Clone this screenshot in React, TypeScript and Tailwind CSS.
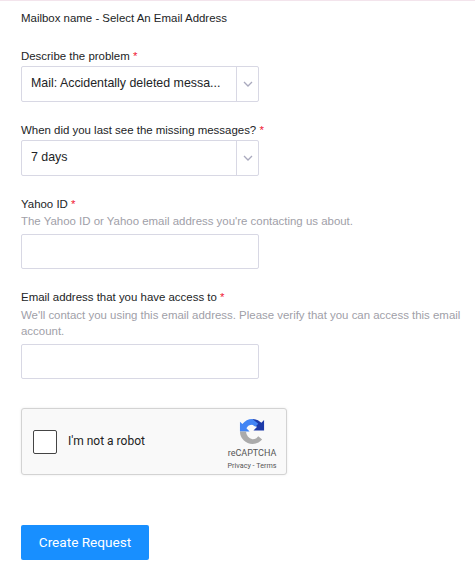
import React from "react";

const font = "font-['Liberation_Sans',Arial,sans-serif]";

function Label({ children }: { children: React.ReactNode }) {
  return (
    <div className="text-[11.45px] leading-[16px] text-[#222426]">
      {children} <span className="text-[#f0142f]">*</span>
    </div>
  );
}

function Select({ value }: { value: string }) {
  return (
    <div className="mt-[2px] flex h-[36px] w-[238px] rounded-[2px] border border-[#d8d8e4] bg-white">
      <div className="flex flex-1 items-center whitespace-nowrap pb-[1px] pl-[9px] text-[12.4px] text-[#222426]">{value}</div>
      <div className="flex w-[22px] items-center justify-center border-l border-[#d8d8e4]">
        <svg width="10" height="6" viewBox="0 0 10 6" fill="none">
          <path d="M1 1l4 4 4-4" stroke="#a9a9bd" strokeWidth="1.3" />
        </svg>
      </div>
    </div>
  );
}

function Input() {
  return <div className="h-[35px] w-[238px] rounded-[2px] border border-[#d8d8e4] bg-white" />;
}

export default function App() {
  return (
    <div className={`${font} h-[567px] w-[475px] overflow-hidden border-t border-[#f3e4ec] bg-white pl-[21px]`}>
      <div className="mt-[9px] text-[11.45px] leading-[16px] text-[#222426]">Mailbox name - Select An Email Address</div>
      <div className="mt-[22px]">
        <Label>Describe the problem</Label>
        <Select value="Mail: Accidentally deleted messa..." />
      </div>
      <div className="mt-[20px]">
        <Label>When did you last see the missing messages?</Label>
        <Select value="7 days" />
      </div>
      <div className="mt-[20px]">
        <Label>Yahoo ID</Label>
        <div className="mt-[1px] mb-[5px] text-[11.45px] leading-[16px] text-[#a0a0a8]">The Yahoo ID or Yahoo email address you're contacting us about.</div>
        <Input />
      </div>
      <div className="mt-[20px]">
        <Label>Email address that you have access to</Label>
        <div className="mt-[2px] mb-[5px] w-[446px] text-[11.45px] leading-[16px] text-[#a0a0a8]">We'll contact you using this email address. Please verify that you can access this email account.</div>
        <Input />
      </div>
      <div className="relative mt-[29px] flex h-[67px] w-[266px] items-center rounded-[3px] border border-[#d3d3d3] bg-[#f9f9f9] shadow-[0_0_3px_rgba(0,0,0,0.08)] font-['Roboto',sans-serif]">
        <div className="ml-[11px] h-[24px] w-[24px] rounded-[2px] border border-[#444] bg-white" />
        <div className="ml-[11px] pb-[1px] text-[12px] text-[#222]">I'm not a robot</div>
        <div className="absolute right-[9px] top-[9px] flex w-[50px] flex-col items-center">
          <svg width="27" height="27" viewBox="0 0 28 28">
            <path d="M14 1a13 13 0 0 1 9.2 3.8L26 2v11H15l3.6-3.6A6.5 6.5 0 0 0 14 7z" fill="#1c3aa9" />
            <path d="M14 1A13 13 0 0 0 3.5 6.3L1 4v10h10L7.7 10.6A6.8 6.8 0 0 1 14 7l3 2.2L20 6z" fill="#4285f4" />
            <path d="M1 14a13 13 0 0 0 13 13c4 0 7.5-1.8 10-4.6L20 19a7 7 0 0 1-6 3 8 8 0 0 1-6.7-8z" fill="#ababab" />
          </svg>
          <div className="mt-[2px] text-[9px] leading-[12px] text-[#555]">reCAPTCHA</div>
          <div className="mt-[2px] whitespace-nowrap text-[7.2px] leading-[10px] text-[#555]">Privacy - Terms</div>
        </div>
      </div>
      <button className="mt-[50px] h-[35px] w-[128px] rounded-[2px] bg-[#188fff] font-['Roboto',sans-serif] text-[13.6px] text-white">Create Request</button>
    </div>
  );
}
